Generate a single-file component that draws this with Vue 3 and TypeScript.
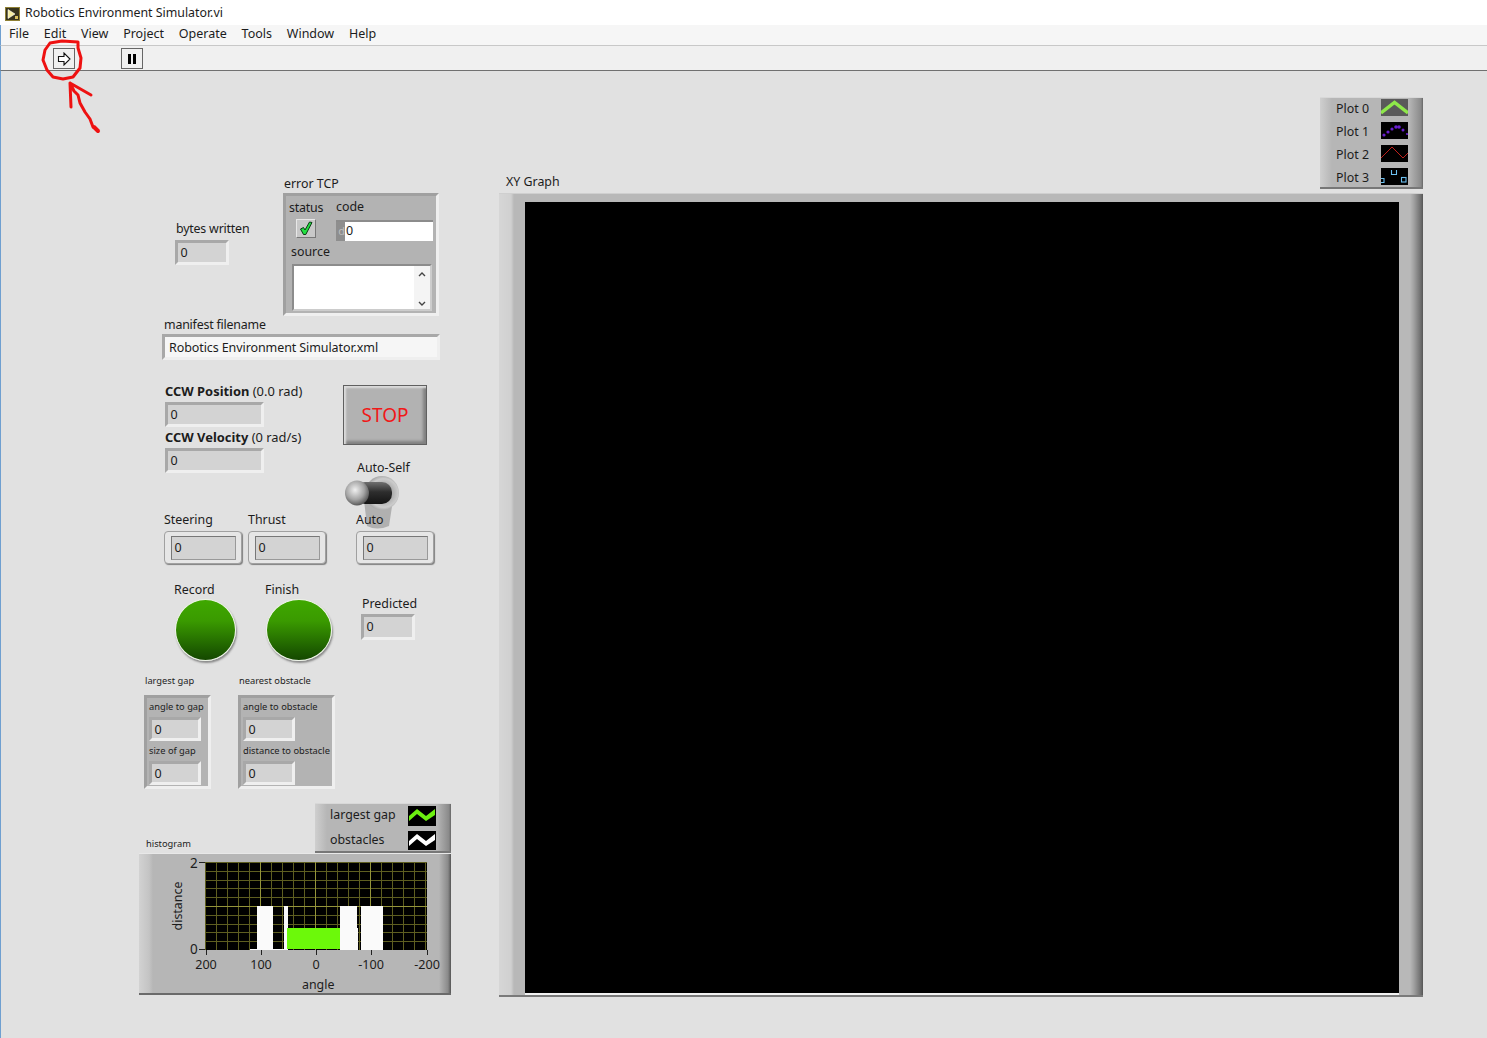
<script setup lang="ts">
interface Label { t: string; x: number; y: number; c?: string }
interface Box { t: string; x: number; y: number; w: number; h: number }

const menus: string[] = ['File', 'Edit', 'View', 'Project', 'Operate', 'Tools', 'Window', 'Help']

const labels: Label[] = [
  { t: 'bytes written', x: 176, y: 228, c: 'narrow' },
  { t: 'error TCP', x: 284, y: 183 },
  { t: 'manifest filename', x: 164, y: 324, c: 'narrow' },
  { t: 'Auto-Self', x: 357, y: 467 },
  { t: 'Steering', x: 164, y: 519 },
  { t: 'Thrust', x: 248, y: 519 },
  { t: 'Record', x: 174, y: 589 },
  { t: 'Finish', x: 265, y: 589 },
  { t: 'Predicted', x: 362, y: 603 },
  { t: 'XY Graph', x: 506, y: 181 },
  { t: 'largest gap', x: 145, y: 680, c: 'tiny' },
  { t: 'nearest obstacle', x: 239, y: 680, c: 'tiny' },
  { t: 'histogram', x: 146, y: 843, c: 'tiny' },
]

const clusterLabels: Label[] = [
  { t: 'status', x: 289, y: 207, c: 'narrow' },
  { t: 'code', x: 336, y: 206 },
  { t: 'source', x: 291, y: 251 },
  { t: 'angle to gap', x: 149, y: 706, c: 'tiny' },
  { t: 'size of gap', x: 149, y: 750, c: 'tiny' },
  { t: 'angle to obstacle', x: 243, y: 706, c: 'tiny' },
  { t: 'distance to obstacle', x: 243, y: 750, c: 'tiny' },
  { t: 'Plot 0', x: 1336, y: 108 },
  { t: 'Plot 1', x: 1336, y: 131 },
  { t: 'Plot 2', x: 1336, y: 154 },
  { t: 'Plot 3', x: 1336, y: 177 },
  { t: 'largest gap', x: 330, y: 814 },
  { t: 'obstacles', x: 330, y: 839 },
  { t: '2', x: 190, y: 862, c: 'axis' },
  { t: '0', x: 190, y: 948, c: 'axis' },
  { t: 'angle', x: 302, y: 984 },
]

const indicators: Box[] = [
  { t: '0', x: 175, y: 240, w: 54, h: 25 },
  { t: '0', x: 165, y: 402, w: 99, h: 25 },
  { t: '0', x: 165, y: 448, w: 99, h: 25 },
  { t: '0', x: 361, y: 614, w: 54, h: 26 },
  { t: '0', x: 149, y: 717, w: 52, h: 24 },
  { t: '0', x: 149, y: 761, w: 52, h: 24 },
  { t: '0', x: 243, y: 717, w: 52, h: 24 },
  { t: '0', x: 243, y: 761, w: 52, h: 24 },
]

const raised: Box[] = [
  { t: '0', x: 164, y: 531, w: 78, h: 33 },
  { t: '0', x: 248, y: 531, w: 78, h: 33 },
  { t: '0', x: 356, y: 531, w: 78, h: 33 },
]

const xTicks: { t: string; x: number }[] = [
  { t: '200', x: 206 },
  { t: '100', x: 261 },
  { t: '0', x: 316 },
  { t: '-100', x: 371 },
  { t: '-200', x: 427 },
]

const minorX: number[] = Array.from({ length: 21 }, (_, i) => i * 11 + 0.5)
const minorY: number[] = Array.from({ length: 11 }, (_, i) => Math.round(i * 8.8) + 0.5)

function at(x: number, y: number): Record<string, string> {
  return { left: `${x}px`, top: `${y}px` }
}
function box(b: Box): Record<string, string> {
  return { left: `${b.x}px`, top: `${b.y}px`, width: `${b.w}px`, height: `${b.h}px` }
}
</script>

<template>
  <div class="window">
    <header class="titlebar">
      <svg class="appicon" width="15" height="14" viewBox="0 0 15 14">
        <rect width="15" height="14" fill="#8f8034" />
        <rect x="1" y="1" width="13" height="12" fill="#37331c" />
        <path d="M3 2.5 L10 7 L3 11.5 Z" fill="#f6eda0" stroke="#fff" stroke-width="0.6" />
        <rect x="10" y="9" width="3" height="3" fill="#d8c060" />
      </svg>
      <span class="title">Robotics Environment Simulator.vi</span>
    </header>

    <nav class="menubar">
      <span v-for="m in menus" :key="m" class="menu">{{ m }}</span>
    </nav>

    <div class="toolbar">
      <div class="toolbtn">
        <svg width="16" height="14" viewBox="0 0 16 14">
          <path d="M2.5 4.5 H8 V1 L14 7 L8 13 V9.5 H2.5 Z" fill="#fff" stroke="#111" stroke-width="1.1" />
        </svg>
      </div>
      <div class="toolbtn pausebtn">
        <i class="pausebar"></i><i class="pausebar"></i>
      </div>
    </div>

    <main class="panel">
      <div class="canvas">
        <!-- clusters -->
        <div class="cluster error"></div>
        <div class="cluster gap"></div>
        <div class="cluster obstacle"></div>

        <!-- error cluster contents -->
        <div class="checkbox">
          <svg width="14" height="15" viewBox="0 0 14 15">
            <path d="M1.5 8 L4.5 6.5 L6 9 L10.5 1 L13 1.5 L6.8 13.5 L4.5 13.5 Z" fill="#22e040" stroke="#0a3a14" stroke-width="1" />
          </svg>
        </div>
        <div class="codefield">
          <span class="radix">d</span>
          <span class="codevalue">0</span>
        </div>
        <div class="sourcefield">
          <div class="scroll">
            <svg width="10" height="8" viewBox="0 0 10 8"><path d="M2 6 L5 3 L8 6" fill="none" stroke="#444" stroke-width="1.4" /></svg>
            <svg width="10" height="8" viewBox="0 0 10 8"><path d="M2 2 L5 5 L8 2" fill="none" stroke="#444" stroke-width="1.4" /></svg>
          </div>
        </div>

        <!-- manifest -->
        <div class="manifest">Robotics Environment Simulator.xml</div>

        <!-- labels -->
        <span v-for="l in labels" :key="l.t + l.x" class="label" :class="l.c" :style="at(l.x, l.y)">{{ l.t }}</span>

        <span class="label ccw ccwpos"><b>CCW Position</b> (0.0 rad)</span>
        <span class="label ccw ccwvel"><b>CCW Velocity</b> (0 rad/s)</span>

        <!-- numeric indicators -->
        <div v-for="b in indicators" :key="`${b.x}-${b.y}`" class="indicator" :style="box(b)">{{ b.t }}</div>

        <div v-for="b in raised" :key="b.x" class="raised" :style="box(b)">
          <div class="raisedinner">{{ b.t }}</div>
        </div>

        <!-- stop -->
        <button class="stop" type="button">STOP</button>

        <!-- toggle -->
        <svg class="toggle" width="60" height="56" viewBox="0 0 60 56">
          <defs>
            <radialGradient id="knob" cx="0.42" cy="0.38" r="0.7">
              <stop offset="0" stop-color="#f0f0f0" />
              <stop offset="0.55" stop-color="#a4a4a4" />
              <stop offset="1" stop-color="#404040" />
            </radialGradient>
            <linearGradient id="lever" x1="0" y1="0" x2="0" y2="1">
              <stop offset="0" stop-color="#707070" />
              <stop offset="0.45" stop-color="#2e2e2e" />
              <stop offset="1" stop-color="#141414" />
            </linearGradient>
            <radialGradient id="base" cx="0.55" cy="0.5" r="0.6">
              <stop offset="0" stop-color="#808080" />
              <stop offset="0.7" stop-color="#cccccc" />
              <stop offset="1" stop-color="#8c8c8c" />
            </radialGradient>
          </defs>
          <path d="M19 24 H48 L44 50 Q32 55 22 50 Z" fill="#b0b0b0" />
          <circle cx="37" cy="17" r="17" fill="url(#base)" />
          <rect x="10" y="6" width="37" height="22" rx="10" fill="url(#lever)" />
          <ellipse cx="12" cy="17" rx="12" ry="12.5" fill="url(#knob)" />
        </svg>
        <span class="label autolabel">Auto</span>

        <!-- LEDs -->
        <div class="led record"></div>
        <div class="led finish"></div>

        <!-- XY graph -->
        <div class="legend plotlegend"></div>
        <div class="swatch s0">
          <svg width="27" height="17" viewBox="0 0 27 17"><path d="M0 14 L13.5 3.5 L27 14" fill="none" stroke="#8ee84a" stroke-width="3.4" /></svg>
        </div>
        <div class="swatch s1">
          <svg width="27" height="17" viewBox="0 0 27 17">
            <g fill="#6a1fd0">
              <circle cx="3" cy="13" r="1.6" />
              <circle cx="7" cy="10" r="1.6" />
              <circle cx="11" cy="7" r="1.6" />
              <circle cx="15" cy="5" r="1.8" />
              <circle cx="18" cy="5" r="1.8" />
              <circle cx="22" cy="8" r="1.5" />
              <circle cx="26" cy="12" r="1.1" />
            </g>
          </svg>
        </div>
        <div class="swatch s2">
          <svg width="27" height="17" viewBox="0 0 27 17"><path d="M0 13 L11 2 L22 13 L27 8" fill="none" stroke="#c0201c" stroke-width="1" /></svg>
        </div>
        <div class="swatch s3">
          <svg width="27" height="17" viewBox="0 0 27 17">
            <g fill="none" stroke="#6cc0f0" stroke-width="1.1">
              <path d="M0 10.5 H3 V14.5 H0" />
              <path d="M10.5 2 V6.5 H15.5 V2" />
              <rect x="20.5" y="9.5" width="4.5" height="4.5" />
            </g>
          </svg>
        </div>
        <div class="xyframe"><div class="xyplot"></div></div>

        <!-- histogram -->
        <div class="legend histlegend"></div>
        <div class="swatch h0">
          <svg width="28" height="20" viewBox="0 0 28 20"><path d="M1 10 L9 3 L18 10 L27 3 V9 L18 15 L9 8 L1 15 Z" fill="#6cf010" /></svg>
        </div>
        <div class="swatch h1">
          <svg width="28" height="19" viewBox="0 0 28 19"><path d="M1 10 L9 3 L18 10 L27 3 V9 L18 15 L9 8 L1 15 Z" fill="#fff" /></svg>
        </div>
        <div class="histframe">
          <svg class="histplot" width="222" height="88" viewBox="0 0 222 88">
            <rect width="222" height="88" fill="#000" />
            <g stroke="#5e5e20" stroke-width="1">
              <line v-for="x in minorX" :key="'x' + x" :x1="x" :x2="x" y1="0" y2="88" />
              <line v-for="y in minorY" :key="'y' + y" x1="0" x2="222" :y1="y" :y2="y" />
            </g>
            <g stroke="#94943a" stroke-width="1">
              <line x1="55.5" x2="55.5" y1="0" y2="88" />
              <line x1="110.5" x2="110.5" y1="0" y2="88" />
              <line x1="165.5" x2="165.5" y1="0" y2="88" />
              <line x1="0" x2="222" y1="44.5" y2="44.5" />
            </g>
            <g fill="#fafafa">
              <rect x="45" y="87" width="8" height="1" />
              <rect x="68" y="87" width="11" height="1" />
              <rect x="52" y="44" width="16" height="44" />
              <rect x="79" y="44" width="4" height="44" />
              <rect x="135" y="44" width="17" height="44" />
              <rect x="135" y="66" width="18" height="22" />
              <rect x="156" y="44" width="22" height="44" />
            </g>
            <rect x="82" y="66" width="53" height="21" fill="#6cf90a" />
          </svg>
          <i class="ytick ytop"></i>
          <i class="ytick ybot"></i>
        </div>
        <template v-for="t in xTicks" :key="t.t">
          <i class="xtick" :style="at(t.x, 950)"></i>
          <span class="label axisx" :style="at(t.x, 964)">{{ t.t }}</span>
        </template>
        <span class="label distance">distance</span>

        <!-- labels on top of clusters / frames -->
        <span v-for="l in clusterLabels" :key="l.t + l.y" class="label" :class="l.c" :style="at(l.x, l.y)">{{ l.t }}</span>

        <!-- red annotation -->
        <svg class="annotation" width="110" height="140" viewBox="0 0 110 140">
          <g fill="none" stroke="#ee1111" stroke-linecap="round" stroke-linejoin="round">
            <path stroke-width="3" d="M78 42 L62 41 L50 43 L45 50 L43 60 L47 70 L53 77 L63 79 L73 77 L80 68 L81 58 L78 48 Z" />
            <path stroke-width="3" d="M71 107 L70 83 L91 95 M70 83 L74 91 L78 95 L80 103 L85 112 L90 119 L93 127" />
            <path stroke-width="4" d="M94 127 L98 131" />
          </g>
        </svg>
      </div>
    </main>
  </div>
</template>

<style>
html, body { margin: 0; padding: 0; background: #e1e1e1; overflow: hidden; }
</style>

<style scoped>
.window {
  width: 1487px;
  height: 1038px;
  display: flex;
  flex-direction: column;
  font-family: "Noto Sans", "Open Sans", sans-serif;
  font-size: 13px;
  color: #1c1c1c;
  overflow: hidden;
}
.titlebar {
  height: 25px;
  flex: none;
  background: #fff;
  display: flex;
  align-items: center;
  gap: 5px;
  padding-left: 5px;
  box-sizing: border-box;
}
.appicon { margin-top: 2px; flex: none; }
.title { font-size: 12.36px; line-height: 25px; }
.menubar {
  height: 20px;
  flex: none;
  background: #f6f6f6;
  display: flex;
  align-items: center;
  padding: 0 0 2px 8px;
  gap: 14.8px;
  border-left: 1px solid #6f9fd0;
  box-sizing: border-box;
}
.menu { line-height: 16px; font-size: 12.5px; }
.toolbar {
  height: 26px;
  flex: none;
  box-sizing: border-box;
  background: #f0f0f0;
  border-top: 1px solid #c8c8c8;
  border-bottom: 1px solid #707070;
  border-left: 1px solid #6f9fd0;
  display: flex;
  align-items: flex-start;
  padding: 2px 0 0 52px;
  gap: 46px;
}
.toolbtn {
  width: 22px;
  height: 21px;
  box-sizing: border-box;
  border: 1px solid #666;
  background: #f0f0f0;
  display: flex;
  align-items: center;
  justify-content: center;
}
.pausebtn { gap: 2px; }
.pausebar { display: block; width: 3px; height: 10px; background: #000; }
.panel {
  flex: 1;
  position: relative;
  background: #e1e1e1;
  border-left: 1px solid #6f9fd0;
}
.canvas {
  position: absolute;
  left: -1px;
  top: -71px;
  width: 1487px;
  height: 1038px;
}
.label {
  position: absolute;
  white-space: nowrap;
  line-height: 16px;
  margin-top: -7px;
  font-size: 12.4px;
}
.narrow { letter-spacing: -0.2px; }
.tiny { font-size: 9.3px; }
.axis { font-size: 13.5px; }
.ccw { left: 165px; font-size: 12.9px; }
.ccwpos { top: 390px; }
.ccwvel { top: 436px; }
.autolabel { left: 356px; top: 519px; }
.axisx { transform: translateX(-50%); font-size: 12.6px; }
.distance {
  left: 178px;
  top: 905px;
  transform: translate(-50%, 0) rotate(-90deg);
}
.indicator {
  position: absolute;
  box-sizing: border-box;
  background: #d3d3d3;
  border: 3px solid;
  border-color: #a8a8a8 #efefef #efefef #a8a8a8;
  padding-left: 2.5px;
  font-size: 12.5px;
  line-height: 19px;
}
.raised {
  position: absolute;
  box-sizing: border-box;
  background: #e6e6e6;
  border: 1px solid #a0a0a0;
  border-radius: 4px;
  box-shadow: 1px 1px 1px #808080;
  padding: 4px 5px 3px 6px;
}
.raisedinner {
  height: 100%;
  box-sizing: border-box;
  background: #d3d3d3;
  border: 1px solid #777;
  border-right-color: #999;
  border-bottom-color: #999;
  padding-left: 2.5px;
  font-size: 12.5px;
  line-height: 22px;
}
.cluster {
  position: absolute;
  box-sizing: border-box;
  background: #b3b3b3;
  border: 3px solid;
  border-color: #a0a0a0 #efefef #efefef #a0a0a0;
}
.error { left: 283px; top: 193px; width: 156px; height: 123px; }
.gap { left: 144px; top: 695px; width: 67px; height: 94px; }
.obstacle { left: 238px; top: 695px; width: 97px; height: 94px; }
.checkbox {
  position: absolute;
  left: 296px;
  top: 219px;
  width: 20px;
  height: 19px;
  box-sizing: border-box;
  background: #c8c8c8;
  border: 1px solid;
  border-color: #e8e8e8 #777 #777 #e8e8e8;
  display: flex;
  align-items: center;
  justify-content: center;
}
.codefield {
  position: absolute;
  left: 336px;
  top: 220px;
  width: 97px;
  height: 21px;
  display: flex;
  box-sizing: border-box;
  border-top: 2px solid #8c8c8c;
}
.radix {
  width: 9px;
  background: #8e8e8e;
  color: #bdbdbd;
  font-size: 11px;
  line-height: 17px;
  text-align: right;
}
.codevalue {
  flex: 1;
  background: #fff;
  line-height: 17px;
  font-size: 12.5px;
  padding-left: 1px;
}
.sourcefield {
  position: absolute;
  left: 292px;
  top: 264px;
  width: 140px;
  height: 47px;
  box-sizing: border-box;
  background: #fff;
  border: 2px solid;
  border-color: #8c8c8c #ccc #ccc #8c8c8c;
  display: flex;
  justify-content: flex-end;
}
.scroll {
  width: 16px;
  background: #f4f4f4;
  display: flex;
  flex-direction: column;
  justify-content: space-between;
  align-items: center;
  padding: 4px 0 1px;
}
.manifest {
  position: absolute;
  left: 162px;
  top: 334px;
  width: 278px;
  height: 26px;
  box-sizing: border-box;
  background: #f6f6f6;
  border: 3px solid;
  border-color: #a8a8a8 #efefef #efefef #a8a8a8;
  padding-left: 4px;
  font-size: 12.5px;
  line-height: 22px;
  letter-spacing: -0.09px;
}
.stop {
  position: absolute;
  left: 343px;
  top: 385px;
  width: 84px;
  height: 60px;
  padding: 0;
  box-sizing: border-box;
  border: 1px solid #606060;
  background: #b2b2b2;
  box-shadow: inset 2px 2px 2px #dcdcdc, inset -3px -3px 3px #808080;
  color: #f01818;
  font-family: "Noto Sans", sans-serif;
  font-size: 19px;
}
.toggle { position: absolute; left: 345px; top: 476px; }
.led {
  position: absolute;
  top: 599px;
  height: 62px;
  box-sizing: border-box;
  border-radius: 50%;
  border: 1.5px solid #eef4e8;
  background: linear-gradient(#3fa800, #3a9a00 35%, #1c5a00 85%, #154800);
  box-shadow: 1px 2px 2px #8a8a8a;
}
.record { left: 175px; width: 61px; }
.finish { left: 266px; width: 66px; }
.legend {
  position: absolute;
  box-sizing: border-box;
  background: linear-gradient(90deg, #cfcfcf, #b6b6b6 12px, #b6b6b6 calc(100% - 14px), #8a8a8a calc(100% - 2px), #666);
  border-top: 1px solid #d8d8d8;
  border-bottom: 2px solid #777;
}
.plotlegend { left: 1320px; top: 97px; width: 103px; height: 92px; }
.histlegend { left: 315px; top: 803px; width: 136px; height: 50px; }
.swatch { position: absolute; background: #000; overflow: hidden; display: flex; }
.s0 { left: 1381px; top: 99px; width: 27px; height: 17px; background: #5a5a5a; }
.s1 { left: 1381px; top: 122px; width: 27px; height: 17px; }
.s2 { left: 1381px; top: 145px; width: 27px; height: 17px; }
.s3 { left: 1381px; top: 168px; width: 27px; height: 17px; }
.h0 { left: 408px; top: 806px; width: 28px; height: 20px; }
.h1 { left: 408px; top: 831px; width: 28px; height: 19px; }
.xyframe {
  position: absolute;
  left: 499px;
  top: 193px;
  width: 924px;
  height: 804px;
  box-sizing: border-box;
  padding: 8px 24px 0 26px;
  background: linear-gradient(90deg, #d6d6d6, #d0d0d0 12px, #b8b8b8 15px, #b8b8b8 calc(100% - 13px), #a0a0a0 calc(100% - 9px), #6c6c6c calc(100% - 2px), #555);
  border-top: 1px solid #cfcfcf;
  border-bottom: 2px solid #7a7a7a;
}
.xyplot {
  height: 100%;
  box-sizing: border-box;
  background: #000;
  border-bottom: 2px solid #f2f2f2;
}
.histframe {
  position: absolute;
  left: 139px;
  top: 853px;
  width: 312px;
  height: 142px;
  box-sizing: border-box;
  padding: 8px 0 0 66px;
  background: linear-gradient(90deg, #d2d2d2, #c4c4c4 10px, #b6b6b6 14px, #b6b6b6 calc(100% - 12px), #8a8a8a calc(100% - 3px), #555);
  border-top: 1px solid #e8e8e8;
  border-bottom: 2px solid #6a6a6a;
}
.histplot { display: block; }
.ytick { position: absolute; left: 60px; width: 6px; height: 1px; background: #222; }
.ytop { top: 8px; }
.ybot { top: 95px; }
.xtick { position: absolute; width: 1px; height: 5px; background: #222; }
.annotation { position: absolute; left: 0; top: 0; }
</style>
